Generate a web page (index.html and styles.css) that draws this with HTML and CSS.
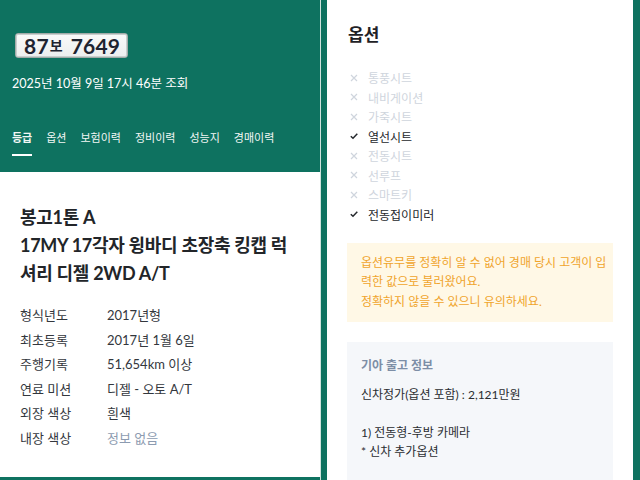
FILE: index.html
```html
<!DOCTYPE html>
<html lang="ko">
<head>
<meta charset="utf-8">
<link rel="stylesheet" href="styles.css">
</head>
<body>
<div class="page">
  <div class="left">
    <header class="hero">
      <div class="plate"><span class="bolt"></span><span class="num">87</span><span class="han">보</span><span class="num num2">7649</span><span class="bolt"></span></div>
      <div class="date">2025년 10월 9일 17시 46분 조회</div>
      <nav class="tabs">
        <span class="tab active">등급</span>
        <span class="tab">옵션</span>
        <span class="tab">보험이력</span>
        <span class="tab">정비이력</span>
        <span class="tab">성능지</span>
        <span class="tab">경매이력</span>
      </nav>
    </header>
    <section class="card">
      <h1 class="title">봉고1톤 A<br>17MY 17각자 윙바디 초장축 킹캡 럭셔리 디젤 2WD A/T</h1>
      <dl class="specs">
        <dt>형식년도</dt><dd>2017년형</dd>
        <dt>최초등록</dt><dd>2017년 1월 6일</dd>
        <dt>주행기록</dt><dd>51,654km 이상</dd>
        <dt>연료 미션</dt><dd>디젤 - 오토 A/T</dd>
        <dt>외장 색상</dt><dd>흰색</dd>
        <dt>내장 색상</dt><dd class="muted">정보 없음</dd>
      </dl>
    </section>
  </div>
  <div class="sep"></div>
  <div class="right">
    <h2 class="opt-title">옵션</h2>
    <ul class="opts">
      <li class="off"><svg viewBox="0 0 8 8"><path d="M1 1L7 7M7 1L1 7"/></svg>통풍시트</li>
      <li class="off"><svg viewBox="0 0 8 8"><path d="M1 1L7 7M7 1L1 7"/></svg>내비게이션</li>
      <li class="off"><svg viewBox="0 0 8 8"><path d="M1 1L7 7M7 1L1 7"/></svg>가죽시트</li>
      <li class="on"><svg viewBox="0 0 8 8"><path d="M0.8 4.2L3 6.3L7.3 1.8"/></svg>열선시트</li>
      <li class="off"><svg viewBox="0 0 8 8"><path d="M1 1L7 7M7 1L1 7"/></svg>전동시트</li>
      <li class="off"><svg viewBox="0 0 8 8"><path d="M1 1L7 7M7 1L1 7"/></svg>선루프</li>
      <li class="off"><svg viewBox="0 0 8 8"><path d="M1 1L7 7M7 1L1 7"/></svg>스마트키</li>
      <li class="on"><svg viewBox="0 0 8 8"><path d="M0.8 4.2L3 6.3L7.3 1.8"/></svg>전동접이미러</li>
    </ul>
    <div class="notice">옵션유무를 정확히 알 수 없어 경매 당시 고객이 입력한 값으로 불러왔어요.<br>정확하지 않을 수 있으니 유의하세요.</div>
    <div class="info">
      <div class="info-title">기아 출고 정보</div>
      <p>신차정가(옵션 포함) : 2,121만원</p>
      <p class="gap">1) 전동형-후방 카메라<br>* 신차 추가옵션</p>
    </div>
  </div>
</div>
</body>
</html>
```

FILE: styles.css
```css
* { box-sizing: border-box; }
html, body { margin: 0; padding: 0; }
body {
  font-family: Lato, "Noto Sans CJK KR", sans-serif;
  background: #0e7260;
  width: 640px;
  height: 480px;
  overflow: hidden;
}
.page {
  display: flex;
  height: 480px;
  background: #0e7260;
}
.left {
  width: 320px;
  display: flex;
  flex-direction: column;
}
.hero {
  height: 172px;
  padding: 31px 0 0 12px;
  color: #fff;
}
.plate {
  display: inline-flex;
  align-items: center;
  height: 25px;
  width: 113px;
  margin-left: 3px;
  background: linear-gradient(#fafafa, #eceeee);
  border: 1px solid #a3aba9;
  box-shadow: inset 0 0 0 1px #c9cfce;
  border-radius: 3px;
  color: #1e2330;
  font-weight: 700;
  padding: 0 2px;
}
.bolt {
  width: 3px;
  height: 3px;
  border-radius: 50%;
  background: #c3c8c8;
}
.num { font-size: 21px; letter-spacing: 0.2px; line-height: 1; margin-left: 6px; }
.han { font-size: 14px; margin-left: 1px; line-height: 1; }
.num2 { margin-left: 8px; margin-right: 6px; }
.date {
  margin-top: 17px;
  font-size: 12.5px;
  line-height: 18px;
}
.tabs {
  display: flex;
  gap: 14px;
  margin-top: 37px;
  font-size: 11px;
}
.tab {
  line-height: 16px;
  padding-bottom: 8px;
  border-bottom: 2px solid transparent;
  color: #f2f7f5;
}
.tab.active {
  font-weight: 700;
  border-bottom-color: #fff;
}
.card {
  background: #fff;
  height: 305px;
  padding: 31px 20px 0 20px;
}
.title {
  margin: 0;
  font-size: 18px;
  line-height: 28px;
  font-weight: 700;
  color: #222529;
  letter-spacing: -0.3px;
}
.specs {
  display: grid;
  grid-template-columns: 87px 1fr;
  row-gap: 6.6px;
  margin: 19px 0 0;
  font-size: 13px;
  line-height: 18px;
  color: #33373d;
}
.specs dt, .specs dd { margin: 0; }
.specs .muted { color: #8c9bb0; }
.sep {
  width: 1px;
  background: #cfe3dd;
  height: 480px;
}
.right {
  width: 306px;
  margin-left: 6px;
  height: 480px;
  background: #fff;
  padding: 24px 20px 0 20px;
}
.opt-title {
  margin: 0 0 0 1px;
  font-size: 17px;
  line-height: 22px;
  font-weight: 700;
  color: #1f2226;
}
.opts {
  list-style: none;
  margin: 22px 0 0;
  padding: 0 0 0 3px;
  font-size: 12px;
}
.opts li {
  display: flex;
  align-items: center;
  height: 19.5px;
  gap: 10px;
}
.opts svg {
  width: 8px;
  height: 8px;
  fill: none;
  stroke-width: 1.2;
}
.opts li.off { color: #cfd5dd; }
.opts li.off svg { stroke: #cfd5dd; }
.opts li.on { color: #25282c; }
.opts li.on svg { stroke: #25282c; stroke-width: 1.5; }
.notice {
  margin-top: 19px;
  background: #fff8e6;
  padding: 10px 4px 11px 14px;
  font-size: 12px;
  line-height: 19.3px;
  color: #f0a42c;
  word-break: break-all;
}
.info {
  margin-top: 20px;
  background: #f5f7fa;
  padding: 14px 14px 20px;
  font-size: 12px;
  line-height: 19px;
  color: #2a2d31;
  height: 140px;
}
.info-title {
  color: #7d8ea6;
  font-weight: 700;
  margin-bottom: 10px;
}
.info p { margin: 0; }
.info p.gap { margin-top: 19px; }
```
